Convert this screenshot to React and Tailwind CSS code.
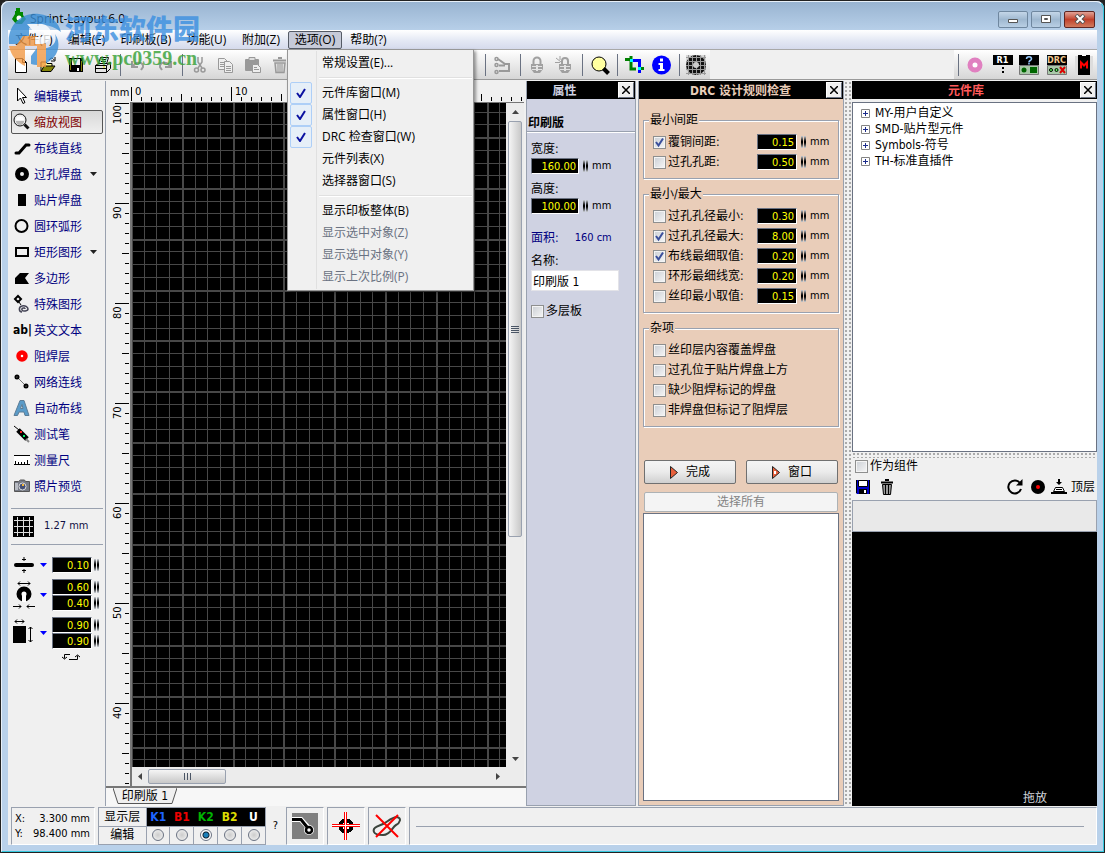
import React from 'react';

const TOOLS = [
  { icon: 'cursor', label: '编辑模式' },
  { icon: 'zoom', label: '缩放视图', active: true },
  { icon: 'track', label: '布线直线' },
  { icon: 'pad', label: '过孔焊盘', more: true },
  { icon: 'smd', label: '贴片焊盘' },
  { icon: 'circle', label: '圆环弧形' },
  { icon: 'rect', label: '矩形图形', more: true },
  { icon: 'poly', label: '多边形' },
  { icon: 'special', label: '特殊图形' },
  { icon: 'text', label: '英文文本' },
  { icon: 'mask', label: '阻焊层' },
  { icon: 'net', label: '网络连线' },
  { icon: 'auto', label: '自动布线' },
  { icon: 'probe', label: '测试笔' },
  { icon: 'ruler', label: '测量尺' },
  { icon: 'photo', label: '照片预览' },
];

const MENU = [
  { label: '常规设置(E)...' },
  null,
  { label: '元件库窗口(M)', checked: true },
  { label: '属性窗口(H)', checked: true },
  { label: 'DRC 检查窗口(W)', checked: true },
  { label: '元件列表(X)' },
  { label: '选择器窗口(S)' },
  null,
  { label: '显示印板整体(B)' },
  { label: '显示选中对象(Z)', disabled: true },
  { label: '显示选中对象(Y)', disabled: true },
  { label: '显示上次比例(P)', disabled: true },
];

const LAYERS = [
  { name: 'K1', color: 'text-[#1e64ff]' },
  { name: 'B1', color: 'text-[#ee0000]' },
  { name: 'K2', color: 'text-[#00b400]' },
  { name: 'B2', color: 'text-[#dcdc00]' },
  { name: 'U', color: 'text-white' },
];

const steps = (n) => Array.from({ length: n }, (_, i) => i);

/* ---------- icons ---------- */

const ICONS = {
  // sidebar
  cursor: (
    <path d="M8.500 4v13l3-3 2.500 5.500 2-1-2.500-5h4z" fill="#fff" stroke="#000" />
  ),
  zoom: (
    <>
      <circle cx="11" cy="10" r="6" fill="#eee" stroke="#111" />
      <path d="M7 10a4 3.500 0 0 1 8 0z" fill="#fff" />
      <path d="M7 11h8a4 4 0 0 1-8 0z" fill="#b5b5b5" />
      <path d="M15.500 14.500l4 4" stroke="#111" strokeWidth="3" />
    </>
  ),
  track: (
    <path d="M7 17h3l7-8h3" fill="none" stroke="#000" strokeWidth="3" strokeLinecap="round" />
  ),
  pad: <circle cx="13" cy="12" r="4.500" fill="none" stroke="#000" strokeWidth="5" />,
  smd: <path d="M9 6h8v12H9z" />,
  circle: <circle cx="12.500" cy="12" r="6" fill="none" stroke="#000" strokeWidth="2" />,
  rect: <path d="M7 8h12v8H7z" fill="none" stroke="#000" strokeWidth="2" />,
  poly: <path d="M6 18v-6l5-5h9l-4 5 4 6z" />,
  special: (
    <>
      <path d="M9 4l3 3-3 3-3-3z" fill="#fff" stroke="#000" strokeWidth="2" />
      <path d="M16 17c0-2-4-1-3 1s6 1 6-1-3-4-6-3c-4 1-3 6 0 6" fill="none" stroke="#445" strokeWidth="1.500" />
      <path d="M10 10l2 3" stroke="#000" />
    </>
  ),
  mask: <circle cx="13" cy="12" r="3.500" fill="#fff" stroke="#f00" strokeWidth="4.500" />,
  net: (
    <>
      <path d="M8 7l9 9" stroke="#777" />
      <circle cx="8" cy="7" r="1.500" fill="none" stroke="#000" strokeWidth="2" />
      <circle cx="17" cy="16" r="1.500" fill="none" stroke="#000" strokeWidth="2" />
    </>
  ),
  auto: (
    <path
      d="M5 19.500L11 4.500h4l5 15h-4l-1-3.500H10l-1.500 3.500zM11.500 12.500h2.500l-1-4z"
      fill="#5a9bc8"
      stroke="#5b7c96"
    />
  ),
  probe: (
    <>
      <path d="M5 4l5 4" stroke="#000" />
      <path d="M9 8l9 9" stroke="#000" strokeWidth="5" />
      <path d="M17 17l3 3" stroke="#888" strokeWidth="2" />
      <path d="M11 9h2v2h-2z" fill="#f22" />
      <path d="M14 13h2v2h-2z" fill="#0e6" />
    </>
  ),
  ruler: (
    <>
      <path d="M5 7h16v10H5z" fill="#fff" />
      <path d="M5 7.500h16M5 16.500h16M6.500 16v-3M9.500 16v-2M12.500 16v-2M15.500 16v-2M18.500 16v-4" stroke="#000" />
    </>
  ),
  photo: (
    <>
      <path d="M5.500 7.500h4l2-1.500h4l1 1.500h4v10h-15z" fill="#777b86" stroke="#555" />
      <path d="M6 9h3v7H6z" fill="#b9bcc4" />
      <circle cx="13.500" cy="12.500" r="3.500" fill="#455075" stroke="#ddd" />
      <path d="M13 10h2v2h-2z" fill="#f4b73a" />
    </>
  ),
  // toolbar
  new: <path d="M5.500 5.500h7l4 4v10h-11zM12.500 5.500v4h4" fill="#fff" stroke="#000" />,
  open: (
    <>
      <path d="M4 18V9h5l1 1.500h5V13" fill="#ffff9a" stroke="#000" />
      <path d="M4 18.500l3-5.500h11l-4 5.500z" fill="#84840a" stroke="#000" />
      <path d="M12 7c2-3 4-2 5 0M18 4v4h-4" fill="none" stroke="#000" />
    </>
  ),
  save: (
    <>
      <path d="M5 5h14v14H6l-1-1z" />
      <path d="M8 6h8v6H8z" fill="#f0f0f0" />
      <path d="M6 6h1v11H6zM17 8h1v10h-1z" fill="#84840a" />
      <path d="M13 15h2v3h-2z" fill="#fff" />
    </>
  ),
  print: (
    <>
      <path d="M7.500 11l2-6.500h8l-2 6.500" fill="#fff" stroke="#000" />
      <path d="M11 6.500h4M10 8.500h5" stroke="#000" />
      <path d="M4.500 12.500l3-2h9l3-1v6l-4 4h-11z" fill="#e4e4e4" stroke="#000" />
      <path d="M4.500 12.500h11v7M15.500 12.500l4-3M5 15.500h10" fill="none" stroke="#000" />
      <path d="M12 14h2" stroke="#dd0" />
    </>
  ),
  undo: <path d="M6 8v6h6M7 13c3-5 11-4 10 1l-2 3" fill="none" stroke="#9a9a9a" strokeWidth="2" />,
  redo: <path d="M18 8v6h-6M17 13c-3-5-11-4-10 1l2 3" fill="none" stroke="#9a9a9a" strokeWidth="2" />,
  cut: (
    <>
      <path d="M10 4v5l4 6M14 4v5l-4 6" fill="none" stroke="#999" strokeWidth="1.500" />
      <circle cx="8.500" cy="17" r="2" fill="none" stroke="#999" strokeWidth="1.500" />
      <circle cx="15" cy="17" r="2" fill="none" stroke="#999" strokeWidth="1.500" />
    </>
  ),
  copy: (
    <>
      <path d="M3.500 5.500h6l3 3v8h-9z" fill="#eee" stroke="#999" />
      <path d="M9.500 8.500h5l3 3v8h-8z" fill="#eee" stroke="#999" />
      <path d="M5 9.500h4M5 11.500h4M5 13.500h4M11 13.500h5M11 15.500h5M11 17.500h5" stroke="#999" />
    </>
  ),
  paste: (
    <>
      <rect x="3" y="6" width="14" height="12" rx="1" fill="#999" />
      <path d="M7 4.500h6v3H7z" fill="#ddd" stroke="#999" />
      <path d="M10.500 11.500h5l3 3v5h-8z" fill="#eee" stroke="#999" />
      <path d="M12 14.500h3M12 16.500h5" stroke="#999" />
    </>
  ),
  trash: (
    <>
      <path d="M4 7.500h13M9 5h4" stroke="#999" strokeWidth="2" />
      <path d="M6 10h10l-1 9.500H7z" fill="#ddd" stroke="#999" strokeWidth="1.500" />
      <path d="M9 11v8M11 11v8M13 11v8" stroke="#999" />
    </>
  ),
  route: (
    <>
      <circle cx="5.500" cy="6" r="1.500" fill="none" stroke="#999" strokeWidth="1.500" />
      <circle cx="5.500" cy="12" r="1.500" fill="none" stroke="#999" strokeWidth="1.500" />
      <circle cx="5.500" cy="19" r="1.500" fill="none" stroke="#999" strokeWidth="1.500" />
      <path d="M7 6l7 5h4v7H8M8 12.500h6" fill="none" stroke="#999" strokeWidth="2" />
    </>
  ),
  lock: (
    <>
      <path d="M7.500 12V8a3.500 3.500 0 0 1 7 0v4" fill="none" stroke="#a0a0a0" strokeWidth="2" />
      <path d="M5 11h12v5l-3 4H8l-3-4z" fill="#a0a0a0" />
      <path d="M6 13.500h10M6 16.500h10" stroke="#e4e4e4" />
      <path d="M11 12v6" stroke="#e4e4e4" strokeWidth="2" />
    </>
  ),
  unlock: (
    <>
      <path d="M9 12V8a3 3 0 0 1 6 0v4" fill="none" stroke="#a0a0a0" strokeWidth="2" />
      <path d="M6 11h12v5l-3 4H9l-3-4z" fill="#a0a0a0" />
      <path d="M7 13.500h10M7 16.500h10" stroke="#e4e4e4" />
      <path d="M12 12v6" stroke="#e4e4e4" strokeWidth="2" />
      <path d="M3 5l5 4M2 9.500h5M7 3v4" stroke="#a0a0a0" />
    </>
  ),
  lens: (
    <>
      <circle cx="11" cy="11" r="7" fill="#ffffa0" stroke="#000" />
      <path d="M15.500 15.500l5 5" stroke="#000" strokeWidth="4" />
    </>
  ),
  crop: (
    <>
      <path d="M2 6.500h6M8 3v13h5" fill="none" stroke="#008000" strokeWidth="3" />
      <path d="M9 7.500h7.500V20" fill="none" stroke="#00f" strokeWidth="3" />
      <path d="M15 15.500h6" stroke="#008000" strokeWidth="3" />
      <path d="M7 6h3v3H7zM15 14h3v3h-3z" fill="#0ff" />
    </>
  ),
  info: (
    <>
      <circle cx="11.500" cy="12" r="9.500" fill="#00f" />
      <path d="M10 5.500h3v3h-3zM8.500 10h4.500v6h1.500v2h-6v-2H10v-4H8.500z" fill="#fff" />
    </>
  ),
  mesh: (
    <>
      <path d="M1 2h20v20H1z" fill="#d8d8d8" />
      <circle cx="11" cy="12" r="10" fill="#111" />
      <path
        d="M3.500 2v20M7.500 2v20M11.500 2v20M15.500 2v20M19.500 2v20M1 4.500h20M1 8.500h20M1 12.500h20M1 16.500h20M1 20.500h20"
        stroke="#999"
      />
      <circle cx="11" cy="12" r="3" fill="#ccc" />
    </>
  ),
  donut: <circle cx="11" cy="12" r="5" fill="#fff" stroke="#e080c0" strokeWidth="5" />,
  question: (
    <>
      <path d="M1 2h20v10H1z" />
      <path d="M1.500 12.500h19v9h-19z" fill="#a9c9a9" stroke="#777" />
      <circle cx="6" cy="17" r="2.500" fill="#060" />
      <path d="M12 14h7v6h-7z" fill="#060" />
      <path d="M8.500 6c0-3 5-3 5 0 0 1.500-2.500 1.500-2.500 3M11 9.500v2" fill="none" stroke="#9cf" strokeWidth="1.500" />
    </>
  ),
  chip: (
    <>
      <path d="M3 3h18v18H3z" fill="#ddd" />
      <path d="M6 2h12v20H6z" />
      <path d="M10 2h4v1h-4z" fill="#fff" />
      <path d="M9 15.500v-6l3 3 3-3v6" fill="none" stroke="#f00" strokeWidth="2" />
    </>
  ),
};

function Icon({ name }) {
  return (
    <svg viewBox="0 0 24 24" className="h-6 w-6 shrink-0" aria-hidden="true">
      {ICONS[name]}
    </svg>
  );
}

/* ---------- small controls ---------- */

function Spin() {
  return (
    <span className="flex h-3 w-[5px] shrink-0 gap-px">
      <i className="h-full flex-1 bg-linear-to-b from-gray-300 via-black to-gray-300" />
      <i className="h-full flex-1 bg-linear-to-b from-gray-300 via-black to-gray-300" />
    </span>
  );
}

function NumBox({ value, label, wide }) {
  return (
    <input
      type="text"
      defaultValue={value}
      aria-label={label}
      className={`${wide ? 'w-12' : 'w-10'} h-4 shrink-0 border border-t-gray-500 border-l-gray-500 border-r-white border-b-white bg-black pr-0.5 text-right text-[11px] leading-3 text-[#ffff00] outline-none`}
    />
  );
}

function Check({ id, checked }) {
  return (
    <span className="relative flex h-[13px] w-[13px] shrink-0">
      <input
        id={id}
        type="checkbox"
        defaultChecked={checked}
        className="peer h-[13px] w-[13px] appearance-none border border-[#8e8f8f] bg-linear-to-br from-[#cbcfd5] to-[#f6f6f6] outline-1 -outline-offset-2 outline-[#f4f4f4]"
      />
      <svg viewBox="0 0 13 13" className="pointer-events-none absolute inset-0 hidden peer-checked:block">
        <path d="M3 6l2.500 3.500L10 2.500" fill="none" stroke="#3a4f9c" strokeWidth="2" />
      </svg>
    </span>
  );
}

function CheckRow({ id, label, checked, value }) {
  return (
    <div className="flex h-5 items-center">
      <Check id={id} checked={checked} />
      <label htmlFor={id} className="ml-0.5 flex-1 whitespace-nowrap">{label}</label>
      {value && (
        <>
          <NumBox value={value} label={label} />
          <span className="ml-1 flex items-center gap-1 text-[11px]">
            <Spin />
            <span className="w-[19px]">mm</span>
          </span>
        </>
      )}
    </div>
  );
}

function PanelHeader({ title, color }) {
  return (
    <div className="flex h-[18px] shrink-0 items-center bg-black">
      <h2 className={`flex-1 pt-0.5 text-center text-xs leading-4 font-bold ${color}`}>{title}</h2>
      <button
        type="button"
        aria-label="关闭"
        className="mr-px flex h-4 w-4 items-center justify-center border border-r-gray-500 border-b-gray-500 border-t-white border-l-white bg-[#f0f0f0]"
      >
        <svg viewBox="0 0 8 8" className="h-2 w-2">
          <path d="M0 0l8 8M8 0L0 8" stroke="#000" strokeWidth="1.500" />
        </svg>
      </button>
    </div>
  );
}

/* ---------- window chrome ---------- */

function Watermark() {
  return (
    <div className="pointer-events-none absolute top-[9px] left-1 z-20 flex opacity-80" aria-hidden="true">
      <svg viewBox="0 0 60 60" className="h-[60px] w-[60px]">
        <path d="M4 34C2 14 18 2 34 4c12 1 20 9 22 18-8-6-14-8-22-6l-10 2v8l-8 8z" fill="#3b8fd6" />
        <path d="M26 46l6-8h10c8-2 10-8 8-14 6 8 4 20-4 26-6 5-14 6-20 4z" fill="#3b8fd6" />
        <path d="M4 36c2 10 8 16 16 20V36h12v21h9V34l-9-8H18l-7 10z" fill="#f39a45" />
        <path d="M22 14h15c12 2 12 18 0 20h-7v-7h6c4-1 4-6 0-6h-8z" fill="#fff" />
      </svg>
      <div className="flex flex-col">
        <span className="pt-1 text-[27px] leading-8 font-black text-[#3b8fe0]">河东软件园</span>
        <span className="font-['Liberation_Serif',serif] text-[20px] leading-6 font-bold text-[#35a035]">
          www.pc0359.cn
        </span>
      </div>
    </div>
  );
}

function TitleBar() {
  return (
    <header className="flex h-7 shrink-0 items-center pl-1 text-xs">
      <svg viewBox="0 0 14 16" className="mr-1 h-4 w-[14px]">
        <path d="M4 0h4v4h3v3l3 4-4 5H4L0 11l3-5V3h1z" fill="#080" />
        <circle cx="7" cy="10" r="2.500" fill="#fff" />
      </svg>
      <h1 className="flex-1 pt-1.5 font-['Open_Sans',sans-serif]">Sprint-Layout 6.0</h1>
      <div className="flex gap-[3px] pt-1.5 pr-0.5">
        <button
          type="button"
          aria-label="最小化"
          className="flex h-[17px] w-[30px] items-center justify-center rounded-xs border border-[#6f879f] bg-linear-to-b from-[#c4d6e8] via-[#9fb8d0] to-[#b9cfe4]"
        >
          <svg viewBox="0 0 12 8" className="h-2 w-3"><path d="M1.500 4.500h9v3h-9z" fill="#fff" stroke="#555" /></svg>
        </button>
        <button
          type="button"
          aria-label="最大化"
          className="flex h-[17px] w-[30px] items-center justify-center rounded-xs border border-[#6f879f] bg-linear-to-b from-[#c4d6e8] via-[#9fb8d0] to-[#b9cfe4]"
        >
          <svg viewBox="0 0 12 10" className="h-[10px] w-3">
            <path d="M1.500 1.500h9v7h-9zM4.500 4.500h3v1h-3z" fill="#fff" stroke="#555" />
          </svg>
        </button>
        <button
          type="button"
          aria-label="关闭"
          className="flex h-[17px] w-[31px] items-center justify-center rounded-xs border border-[#5e2522] bg-linear-to-b from-[#e0a297] via-[#c0402b] to-[#d07a5e]"
        >
          <svg viewBox="0 0 12 10" className="h-[10px] w-3">
            <path d="M2 1l8 8M10 1L2 9" stroke="#555" strokeWidth="4" />
            <path d="M2.500 1.500l7 7M9.500 1.500l-7 7" stroke="#fff" strokeWidth="2" />
          </svg>
        </button>
      </div>
    </header>
  );
}

function OptionsMenu() {
  return (
    <div
      role="menu"
      className="absolute top-[18px] -left-px z-30 w-[187px] border border-[#979797] bg-[#f0f0f0] px-px py-0.5 shadow-[2px_2px_3px_rgba(0,0,0,0.4)]"
    >
      <div className="absolute inset-y-px left-7 w-px bg-[#e0e0e0]" />
      {MENU.map((item, i) =>
        item ? (
          <button
            key={i}
            type="button"
            role="menuitem"
            disabled={item.disabled}
            className="flex h-[22px] w-full items-center whitespace-nowrap text-black disabled:text-gray-500"
          >
            <span className="mr-2.5 flex w-[23px] justify-end">
              {item.checked && (
                <span className="flex h-[22px] w-[22px] items-center justify-center rounded-xs border border-[#aecff7] bg-[#e6eff8]">
                  <svg viewBox="0 0 10 10" className="h-[10px] w-[10px]">
                    <path d="M1 5l3 4 5-8" fill="none" stroke="#0c12a1" strokeWidth="2" />
                  </svg>
                </span>
              )}
            </span>
            {item.label}
          </button>
        ) : (
          <div key={i} className="flex h-2 items-center pl-[30px]">
            <div className="h-0.5 flex-1 border-t border-[#e0e0e0] bg-white" />
          </div>
        )
      )}
    </div>
  );
}

function MenuBar() {
  return (
    <nav className="flex h-5 shrink-0 items-center border-b border-[#a8a8a8] bg-linear-to-b from-white via-[#e6eaf5] to-[#d5daec] font-['Open_Sans','Noto_Sans_CJK_SC',sans-serif] text-xs">
      <button type="button" className="w-[52px]">文件(F)</button>
      <button type="button" className="w-[53px]">编辑(E)</button>
      <button type="button" className="w-[66px]">印刷板(B)</button>
      <button type="button" className="w-[55px]">功能(U)</button>
      <button type="button" className="w-[54px]">附加(Z)</button>
      <div className="relative">
        <button
          type="button"
          aria-haspopup="menu"
          aria-expanded="true"
          className="flex h-[18px] w-[54px] items-center justify-center rounded-xs border border-[#555b66] bg-[#c6cad8]"
        >
          选项(O)
        </button>
        <OptionsMenu />
      </div>
      <button type="button" className="w-[53px]">帮助(?)</button>
    </nav>
  );
}

function ToolButton({ name, label }) {
  return (
    <button type="button" aria-label={label || name} className="flex w-[27px] shrink-0 items-center justify-center">
      <Icon name={name} />
    </button>
  );
}

function Sep() {
  return (
    <span className="flex w-2 shrink-0 justify-center">
      <i className="h-[22px] w-px bg-gray-500" />
    </span>
  );
}

function Toolbar() {
  return (
    <div className="flex h-[30px] shrink-0 items-center border-b border-[#9a9a9a] bg-linear-to-b from-white to-[#d6d6d6]">
      <ToolButton name="new" />
      <ToolButton name="open" />
      <ToolButton name="save" />
      <ToolButton name="print" />
      <Sep />
      <ToolButton name="undo" />
      <ToolButton name="redo" />
      <Sep />
      <ToolButton name="cut" />
      <ToolButton name="copy" />
      <ToolButton name="paste" />
      <ToolButton name="trash" />
      <div className="w-[187px] shrink-0" />
      <Sep />
      <ToolButton name="route" />
      <Sep />
      <ToolButton name="lock" />
      <ToolButton name="unlock" />
      <Sep />
      <ToolButton name="lens" />
      <Sep />
      <ToolButton name="crop" />
      <ToolButton name="info" />
      <Sep />
      <ToolButton name="mesh" />
      <div className="h-full flex-1 bg-[#f0f0f0]" />
      <Sep />
      <ToolButton name="donut" />
      <button type="button" className="flex w-[27px] flex-col items-center">
        <span className="w-5 bg-black text-center text-[9px] leading-[10px] font-bold text-white">R1</span>
        <svg viewBox="0 0 4 10" className="h-[10px] w-1">
          <path d="M1 2h2v2H1zM1 6h2v2H1z" />
        </svg>
      </button>
      <ToolButton name="question" label="元件信息" />
      <button type="button" className="flex w-[27px] flex-col items-center">
        <span className="w-5 bg-black text-center text-[9px] leading-[10px] font-bold text-[#f0c890]">DRC</span>
        <svg viewBox="0 0 20 10" className="h-[10px] w-5">
          <path d="M.5.5h19v9H.5z" fill="#a9c9a9" stroke="#777" />
          <circle cx="4" cy="5" r="1.500" fill="#5f5" stroke="#000" />
          <circle cx="9.500" cy="5" r="1.500" fill="#5f5" stroke="#000" />
          <path d="M13 2l5 6M18 2l-5 6" stroke="#d00" strokeWidth="2" />
        </svg>
      </button>
      <ToolButton name="chip" label="Macro" />
    </div>
  );
}

/* ---------- sidebar ---------- */

function Sidebar() {
  return (
    <aside className="flex w-[98px] shrink-0 flex-col border-r border-gray-400 pr-0.5 pl-[3px]">
      <div className="flex flex-col gap-0.5 pt-[3px]">
        {TOOLS.map((t) => (
          <button
            key={t.label}
            type="button"
            className={`flex h-6 items-center rounded-xs border text-xs whitespace-nowrap ${
              t.active
                ? 'border-[#555] bg-linear-to-b from-[#d8d8d8] to-[#efefef] text-[#800000]'
                : 'border-transparent text-[#000080]'
            }`}
          >
            {t.icon === 'text' ? (
              <span className="w-[22px] shrink-0 pl-px text-left font-bold text-black">ab|</span>
            ) : (
              <span className="-ml-1 flex w-[26px] shrink-0 justify-center"><Icon name={t.icon} /></span>
            )}
            <span className="pt-0.5">{t.label}</span>
            {t.more && (
              <svg viewBox="0 0 7 4" className="ml-2 h-1 w-[7px]"><path d="M0 0h7L3.500 4z" fill="#222" /></svg>
            )}
          </button>
        ))}
      </div>
      <button type="button" className="mt-2.5 flex h-[37px] items-center border-y border-gray-400 pl-0.5 text-[11px] text-[#111144]">
        <svg viewBox="0 0 21 21" className="mr-2.5 h-[21px] w-[21px]">
          <path d="M0 0h21v21H0z" />
          <path d="M4.500 1v19M10.500 1v19M16.500 1v19M1 4.500h19M1 10.500h19M1 16.500h19" stroke="#ddd" />
        </svg>
        1.27 mm
      </button>
      <div className="flex flex-col gap-1.5 pt-3 pl-0.5">
        <div className="flex items-center">
          <svg viewBox="0 0 22 16" className="h-4 w-[22px]">
            <rect x="1" y="6" width="20" height="4" rx="2" />
            <path d="M11 0v4M11 12v4M9 2.500h4M9 13.500h4" stroke="#000" />
          </svg>
          <DropArrow />
          <NumBox value="0.10" label="线宽" />
          <span className="ml-0.5"><Spin /></span>
        </div>
        <div className="flex items-center">
          <svg viewBox="0 0 22 30" className="h-[30px] w-[22px]">
            <path d="M5 3.500h12M7 1.500L5 3.500l2 2M15 1.500l2 2-2 2" fill="none" stroke="#000" />
            <circle cx="11" cy="14" r="5" fill="#fff" stroke="#000" strokeWidth="5" />
            <path d="M9 15h4v7H9z" fill="#fff" />
            <path d="M0 26.500h8M6 24.500l2 2-2 2M22 26.500h-8M16 24.500l-2 2 2 2" fill="none" stroke="#000" />
          </svg>
          <DropArrow />
          <span className="flex flex-col">
            <NumBox value="0.60" label="焊盘外径" />
            <NumBox value="0.40" label="焊盘内径" />
          </span>
          <span className="ml-0.5 flex flex-col gap-1"><Spin /><Spin /></span>
        </div>
        <div className="flex items-center">
          <svg viewBox="0 0 22 30" className="h-[30px] w-[22px]">
            <path d="M2 3.500h9M4 1.500l-2 2 2 2M9 1.500l2 2-2 2" fill="none" stroke="#000" />
            <path d="M0 8h13v17H0z" />
            <path d="M17.500 9v15M15.500 11l2-2 2 2M15.500 22l2 2 2-2" fill="none" stroke="#000" />
          </svg>
          <DropArrow />
          <span className="flex flex-col">
            <NumBox value="0.90" label="贴片宽度" />
            <NumBox value="0.90" label="贴片高度" />
          </span>
          <span className="ml-0.5 flex flex-col gap-1"><Spin /><Spin /></span>
        </div>
      </div>
      <button type="button" aria-label="交换" className="mt-1 ml-[50px] w-5">
        <svg viewBox="0 0 20 8" className="h-2 w-5">
          <path d="M9 1.500H3.500v4M1 4l2.500 2L6 4M8 6.500h8.500v-4M14 4l2.500-2L19 4" fill="none" stroke="#000" />
        </svg>
      </button>
    </aside>
  );
}

function DropArrow() {
  return (
    <svg viewBox="0 0 7 4" className="mx-[5px] h-1 w-[7px] shrink-0">
      <path d="M0 0h7L3.500 4z" fill="#00f" />
    </svg>
  );
}

/* ---------- board ---------- */

function tickSize(i) {
  if (i % 10 === 0) return 14;
  return i % 5 === 0 ? 7 : 4;
}

function Board() {
  return (
    <main className="flex min-w-0 flex-1 flex-col">
      <div className="flex min-h-0 flex-1 flex-col border-b-2 border-[#777] bg-[#f0f0f0] pr-0.5">
        <div className="flex h-[21px] shrink-0">
          <span className="w-6 shrink-0 pt-1 pl-1 text-[11px] leading-4">mm</span>
          <svg className="h-full flex-1 overflow-hidden" shapeRendering="crispEdges">
            {steps(160).map((i) => (
              <rect key={i} x={1 + i * 10} y={20 - tickSize(i)} width="1" height={tickSize(i)} />
            ))}
            {steps(2).map((i) => (
              <text key={i} x={5 + i * 100} y="14" fontSize="11" shapeRendering="auto">{i * 10}</text>
            ))}
          </svg>
        </div>
        <div className="flex min-h-0 flex-1">
          <svg className="h-full w-6 shrink-0 overflow-hidden" shapeRendering="crispEdges">
            {steps(101).map((i) => (
              <rect key={i} x={23 - tickSize(i)} y={1 + i * 10} width={tickSize(i)} height="1" />
            ))}
            {steps(7).map((i) => (
              <text
                key={i}
                transform={`translate(15 ${(i ? 17 : 22) + i * 100}) rotate(-90)`}
                fontSize="11"
              >
                {100 - i * 10}
              </text>
            ))}
          </svg>
          <div className="flex min-w-0 flex-1 flex-col border-t border-l-2 border-[#777]">
            <div className="flex min-h-0 flex-1">
              <svg className="h-full min-w-0 flex-1 overflow-hidden bg-black" shapeRendering="crispEdges">
                {steps(120).map((i) => (
                  <rect
                    key={`v${i}`}
                    x={Math.round(i * 12.7) - 1}
                    y="0"
                    width={i % 4 === 0 ? 2 : 1}
                    height="100%"
                    fill="#484848"
                  />
                ))}
                {steps(100).map((i) => (
                  <rect
                    key={`h${i}`}
                    x="0"
                    y={Math.round(i * 12.7) - 4}
                    width="100%"
                    height={i % 4 === 3 ? 2 : 1}
                    fill="#484848"
                  />
                ))}
              </svg>
              <div className="flex w-[18px] shrink-0 flex-col items-center bg-[#ececec]">
                <svg viewBox="0 0 7 4" className="my-[7px] h-1 w-[7px]"><path d="M0 4h7L3.500 0z" fill="#444" /></svg>
                <div className="flex h-[416px] w-[14px] flex-col items-center justify-center gap-px rounded-xs border border-gray-400 bg-linear-to-r from-[#f5f5f5] to-[#c8c8c8]">
                  <i className="h-px w-2 bg-gray-600" />
                  <i className="h-px w-2 bg-gray-600" />
                  <i className="h-px w-2 bg-gray-600" />
                  <i className="h-px w-2 bg-gray-600" />
                </div>
                <div className="flex-1" />
                <svg viewBox="0 0 7 4" className="my-1.5 h-1 w-[7px]"><path d="M0 0h7L3.500 4z" fill="#444" /></svg>
              </div>
            </div>
            <div className="flex h-[19px] shrink-0 items-center bg-[#ececec] pr-6">
              <svg viewBox="0 0 4 7" className="mx-1.5 h-[7px] w-1"><path d="M4 0v7L0 3.500z" fill="#444" /></svg>
              <div className="flex h-[15px] w-[78px] items-center justify-center gap-0.5 rounded-xs border border-gray-400 bg-linear-to-b from-[#f5f5f5] to-[#c8c8c8]">
                <i className="h-[7px] w-px bg-gray-600" />
                <i className="h-[7px] w-px bg-gray-600" />
                <i className="h-[7px] w-px bg-gray-600" />
              </div>
              <div className="flex-1" />
              <svg viewBox="0 0 4 7" className="h-[7px] w-1"><path d="M0 0v7l4-3.500z" fill="#444" /></svg>
            </div>
          </div>
        </div>
      </div>
      <div className="flex h-[18px] shrink-0 bg-[#f7f7f7] pl-[7px]">
        <button type="button" className="relative flex h-4 w-16 items-center justify-center text-xs">
          <svg viewBox="0 0 64 16" className="absolute inset-0 h-4 w-16">
            <path d="M0 0l5 15.500h54L64 0" fill="#f0f0f0" stroke="#555" />
          </svg>
          <span className="relative">印刷版 1</span>
        </button>
      </div>
    </main>
  );
}

/* ---------- property panel ---------- */

function SizeField({ label, value }) {
  return (
    <div className="flex flex-col">
      <span className="leading-[18px]">{label}:</span>
      <div className="flex items-center text-[11px]">
        <NumBox value={value} label={label} wide />
        <span className="ml-1 flex items-center gap-1"><Spin />mm</span>
      </div>
    </div>
  );
}

function Properties() {
  return (
    <section className="mr-0.5 flex w-[110px] shrink-0 flex-col border-x border-b border-gray-400 bg-[#cfd2e2] text-xs">
      <PanelHeader title="属性" color="pr-4 text-[#cfd2e2]" />
      <h3 className="mt-4 border-b border-gray-400 pl-px leading-4 font-bold shadow-[0_1px_0_#fff]">印刷版</h3>
      <div className="flex flex-col px-1 pt-2">
        <div className="flex flex-col gap-1.5">
          <SizeField label="宽度" value="160.00" />
          <SizeField label="高度" value="100.00" />
        </div>
        <div className="mt-4 flex gap-4 leading-4 text-[#000080]">
          <span>面积:</span>
          <span className="text-[11px]">160 cm</span>
        </div>
        <label htmlFor="board-name" className="mt-1.5 leading-[18px]">名称:</label>
        <input
          id="board-name"
          type="text"
          defaultValue="印刷版 1"
          className="h-[21px] w-[88px] border border-[#e3e3e8] bg-white px-px outline-none"
        />
        <div className="mt-3 flex h-4 items-center gap-0.5">
          <Check id="multi" />
          <label htmlFor="multi">多层板</label>
        </div>
      </div>
    </section>
  );
}

/* ---------- DRC panel ---------- */

function Group({ title, children }) {
  return (
    <fieldset className="border border-gray-400 px-[9px] pb-1.5 shadow-[1px_1px_0_#fff,inset_1px_1px_0_#fff]">
      <legend className="-ml-1 bg-[#e9cdb9] px-px leading-4">{title}</legend>
      {children}
    </fieldset>
  );
}

function ActionButton({ label, hollow }) {
  return (
    <button
      type="button"
      className="flex h-6 flex-1 items-center justify-center gap-2 rounded-xs border border-[#707070] bg-linear-to-b from-[#f4f4f4] via-[#ebebeb] to-[#cfcfcf]"
    >
      <svg viewBox="0 0 8 13" className="h-[13px] w-2">
        <path d="M.5.5l7 6-7 6z" fill="#e8603c" stroke="#222" />
        {hollow && <path d="M2 5h2v3H2z" fill="#fff" />}
      </svg>
      {label}
    </button>
  );
}

function DrcPanel() {
  return (
    <section className="flex w-[206px] shrink-0 flex-col border-x border-b border-gray-400 bg-[#e9cdb9] text-xs">
      <PanelHeader title="DRC 设计规则检查" color="pl-4 text-[#e9cdb9]" />
      <div className="flex min-h-0 flex-1 flex-col px-1 pb-1">
        <div className="flex flex-col gap-[7px] pt-[13px]">
          <Group title="最小间距">
            <div className="h-1" />
            <CheckRow id="d1" label="覆铜间距:" value="0.15" checked />
            <CheckRow id="d2" label="过孔孔距:" value="0.50" />
          </Group>
          <Group title="最小/最大">
            <div className="h-1" />
            <CheckRow id="d3" label="过孔孔径最小:" value="0.30" />
            <CheckRow id="d4" label="过孔孔径最大:" value="8.00" checked />
            <CheckRow id="d5" label="布线最细取值:" value="0.20" checked />
            <CheckRow id="d6" label="环形最细线宽:" value="0.20" />
            <CheckRow id="d7" label="丝印最小取值:" value="0.15" />
          </Group>
          <Group title="杂项">
            <div className="h-1" />
            <CheckRow id="d8" label="丝印层内容覆盖焊盘" />
            <CheckRow id="d9" label="过孔位于贴片焊盘上方" />
            <CheckRow id="d10" label="缺少阻焊标记的焊盘" />
            <CheckRow id="d11" label="非焊盘但标记了阻焊层" />
          </Group>
        </div>
        <div className="mt-[33px] flex gap-2.5 px-px">
          <ActionButton label="完成" />
          <ActionButton label="窗口" hollow />
        </div>
        <button
          type="button"
          disabled
          className="mx-px mt-2 h-5 shrink-0 rounded-xs border border-[#adb2b5] bg-[#f4f4f4] leading-4 text-[#838383]"
        >
          选择所有
        </button>
        <div className="mt-px flex-1 border border-gray-500 bg-white" />
      </div>
    </section>
  );
}

/* ---------- library ---------- */

function Library() {
  return (
    <section className="flex w-[245px] shrink-0 flex-col text-xs">
      <PanelHeader title="元件库" color="text-[#ff5a5a]" />
      <ul className="mt-[3px] h-[350px] border border-gray-500 bg-white pt-0.5 pl-2">
        {['MY-用户自定义', 'SMD-贴片型元件', 'Symbols-符号', 'TH-标准直插件'].map((name) => (
          <li key={name} className="flex h-4 items-center">
            <svg viewBox="0 0 9 9" className="mr-[5px] h-[9px] w-[9px]">
              <path d="M.5.5h8v8h-8z" fill="#fff" stroke="#848484" />
              <path d="M2 4.500h5M4.500 2v5" stroke="#1c2c8c" />
            </svg>
            {name}
          </li>
        ))}
      </ul>
      <div className="h-1.5 bg-[radial-gradient(#aaa_1px,transparent_1px)] bg-size-[4px_4px]" />
      <div className="flex h-4 items-center gap-0.5 pl-[3px]">
        <Check id="as-part" />
        <label htmlFor="as-part">作为组件</label>
      </div>
      <div className="flex h-[26px] items-center pr-0.5 pl-1">
        <button type="button" aria-label="保存">
          <svg viewBox="0 0 14 14" className="h-[14px] w-[14px]">
            <path d="M0 0h14v14H1l-1-1z" fill="#00c" />
            <path d="M0 0h1v13H0zM13 0h1v14h-1z" />
            <path d="M2.500.5h9v6h-9z" fill="#fff" stroke="#000" />
            <path d="M3 9h8v5H3z" />
            <path d="M8 10h2v3H8z" fill="#fff" />
          </svg>
        </button>
        <button type="button" aria-label="删除" className="ml-2.5">
          <svg viewBox="0 0 14 16" className="h-4 w-[14px]">
            <path d="M1 3.500h12M5 1h4" stroke="#000" strokeWidth="2" />
            <path d="M2.500 5.500h9l-1 10h-7z" fill="#999" stroke="#000" />
            <path d="M5.500 6v9M8.500 6v9" stroke="#000" />
          </svg>
        </button>
        <div className="flex-1" />
        <button type="button" aria-label="旋转">
          <svg viewBox="0 0 16 16" className="h-4 w-4">
            <path d="M13 4a6.500 6.500 0 1 0 1 6" fill="none" stroke="#000" strokeWidth="2" />
            <path d="M15.500 0v6.500H9z" />
          </svg>
        </button>
        <button type="button" aria-label="焊盘" className="ml-2">
          <svg viewBox="0 0 14 14" className="h-[14px] w-[14px]">
            <circle cx="7" cy="7" r="7" />
            <circle cx="7" cy="7" r="2" fill="#f00" />
          </svg>
        </button>
        <button type="button" className="ml-1.5 flex items-center gap-1">
          <svg viewBox="0 0 16 16" className="h-4 w-4">
            <path d="M7 0h2v3h2L8 6 5 3h2z" />
            <path d="M2.500 12.500l2-4h7l2 4z" fill="#fff" stroke="#000" />
            <path d="M5 10.500h6" stroke="#000" />
            <path d="M0 13h16v2H0z" />
          </svg>
          顶层
        </button>
      </div>
      <div className="h-8 border border-gray-400 bg-[#e9e9e9]" />
      <div className="flex flex-1 items-end justify-end bg-black pr-[50px] leading-4 text-gray-300">拖放</div>
    </section>
  );
}

/* ---------- status bar ---------- */

function StatusBar() {
  return (
    <footer className="flex h-[38px] shrink-0 gap-[3px] pl-[3px] text-[11px]">
      <div className="grid w-[84px] grid-cols-[auto_1fr] content-center border border-t-gray-400 border-l-gray-400 border-r-white border-b-white pr-1 pl-[3px] leading-[15px]">
        <span>X:</span>
        <span className="text-right">3.300 mm</span>
        <span>Y:</span>
        <span className="text-right">98.400 mm</span>
      </div>
      <table className="w-[168px] border-collapse border border-gray-400 text-center text-xs">
        <tbody>
          <tr className="h-[18px]">
            <th className="w-12 border border-gray-400 p-0 leading-4 font-normal">显示层</th>
            {LAYERS.map((l) => (
              <th key={l.name} className={`w-6 bg-black p-0 leading-4 font-bold ${l.color}`}>{l.name}</th>
            ))}
          </tr>
          <tr className="h-[18px]">
            <th className="border border-gray-400 p-0 leading-4 font-normal">编辑</th>
            {LAYERS.map((l) => (
              <td key={l.name} className="border border-gray-400 p-0">
                <input
                  type="radio"
                  name="layer"
                  aria-label={l.name}
                  defaultChecked={l.name === 'K2'}
                  className="mx-auto block h-3 w-3 appearance-none rounded-full border border-gray-500 bg-[radial-gradient(#ccc,#f6f6f6)] checked:bg-[radial-gradient(#1b7fb8_0_2px,#123_3px,#fff_4px)]"
                />
              </td>
            ))}
          </tr>
        </tbody>
      </table>
      <button type="button" className="w-[13px]">?</button>
      <div className="ml-px flex gap-[3px]">
        <button type="button" aria-label="导线" className="flex w-[38px] items-center justify-center border border-t-gray-400 border-l-gray-400 border-r-white border-b-white">
          <svg viewBox="0 0 26 26" className="h-[26px] w-[26px]">
            <path d="M0 0h26v26H0z" fill="#808080" />
            <path d="M0 6.500h9l9 10" fill="none" stroke="#fff" strokeWidth="5" />
            <circle cx="17" cy="17" r="5" fill="#fff" />
            <path d="M0 6.500h9l8 10" fill="none" stroke="#000" strokeWidth="3" />
            <circle cx="17" cy="17" r="3" fill="#fff" stroke="#000" strokeWidth="2.500" />
          </svg>
        </button>
        <button type="button" aria-label="捕捉" className="flex w-[38px] items-center justify-center border border-t-gray-400 border-l-gray-400 border-r-white border-b-white">
          <svg viewBox="0 0 28 28" className="h-7 w-7" shapeRendering="crispEdges">
            <circle cx="14" cy="14" r="5.500" fill="#fff" stroke="#000" strokeWidth="4" />
            <path d="M13.500 0v28M0 13.500h28" stroke="#f00" strokeWidth="3" />
            <path d="M13.500 0v28M0 13.500h28" stroke="#fff" strokeWidth="1" />
          </svg>
        </button>
        <button type="button" aria-label="橡皮筋" className="flex w-[38px] items-center justify-center border border-t-gray-400 border-l-gray-400 border-r-white border-b-white">
          <svg viewBox="0 0 30 26" className="h-[26px] w-[30px]">
            <path d="M2 19c-2-5 5-6 9-8s9-7 14-7c5 1 3 6-1 8s-5 10-13 10c-4 0-8 0-9-3z" fill="none" stroke="#3c443c" strokeWidth="2" />
            <path d="M4 2l22 22M26 2L4 24" stroke="#f00" strokeWidth="2" />
          </svg>
        </button>
      </div>
      <div className="flex flex-1 items-center border border-t-gray-400 border-l-gray-400 border-r-white border-b-white pr-3 pl-1.5">
        <div className="h-px flex-1 bg-gray-400" />
      </div>
    </footer>
  );
}

export default function App() {
  return (
    <div className="h-screen bg-[#222]">
      <div className="relative flex h-full flex-col rounded-t-lg border border-[#222] bg-[#b9d1ea] font-['DejaVu_Sans_Condensed','Noto_Sans_CJK_SC',sans-serif] text-black">
        <div className="flex min-h-0 flex-1 flex-col rounded-t-lg border border-t-[#e8f0f8] border-r-[#35c8de] border-b-[#35c8de] border-l-[#e8f0f8] bg-linear-to-b from-[#99b4d1] to-[#b9d1ea] to-[30px] px-1.5 pb-1.5">
          <TitleBar />
          <MenuBar />
          <div className="flex min-h-0 flex-1 flex-col bg-[#f0f0f0]">
            <Toolbar />
            <div className="flex min-h-0 flex-1 py-px">
              <Sidebar />
              <Board />
              <Properties />
              <DrcPanel />
              <div className="w-2 shrink-0 bg-[radial-gradient(#aaa_1px,transparent_1px)] bg-size-[4px_4px]" />
              <Library />
            </div>
            <StatusBar />
          </div>
        </div>
        <Watermark />
      </div>
    </div>
  );
}
